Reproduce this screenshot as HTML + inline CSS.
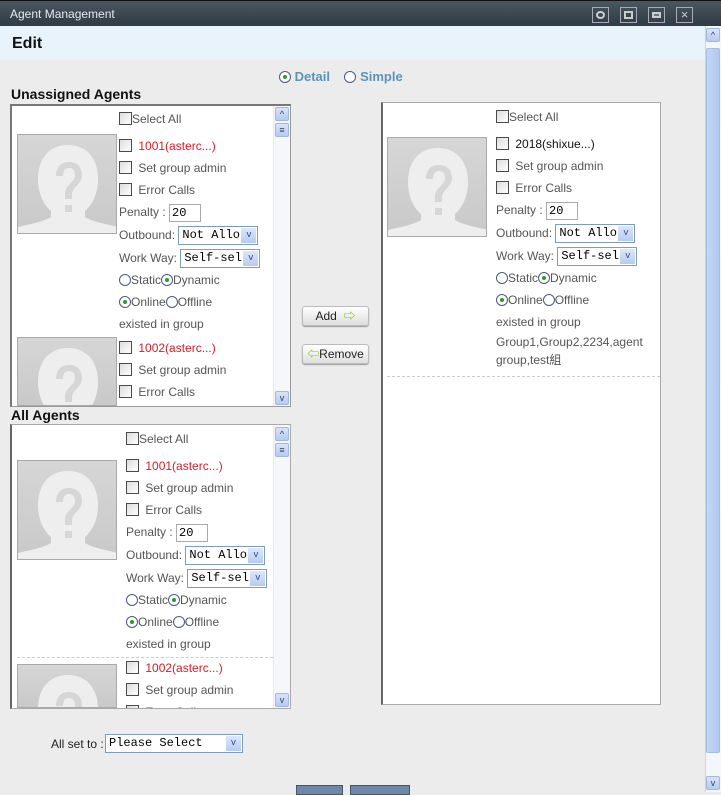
<!DOCTYPE html>
<html><head><meta charset="utf-8">
<style>
*{margin:0;padding:0;box-sizing:border-box}
body{width:721px;height:792px;overflow:hidden;background:#ececec;font-family:"Liberation Sans","Noto Sans CJK SC",sans-serif;font-size:12px;color:#555;position:relative}
.a{position:absolute}
.title{left:0;top:0;width:721px;height:26px;background:linear-gradient(#4a5660,#2e3a44);border-top:1px solid #111}
.title span{position:absolute;left:10px;top:6px;color:#e8e8e8;font-size:12px}
.tb{position:absolute;top:6px;width:17px;height:16px;border:1px solid #aab}
.edit{left:0;top:26px;width:705px;height:34px;background:#e8f3fc}
.edit b{position:absolute;left:12px;top:9px;font-size:16px;color:#111}
.vs{left:705px;top:26px;width:16px;height:766px;background:#f3f6fb;border-left:1px solid #c8d4e4}
.thumb{left:706px;top:48px;width:14px;height:705px;background:linear-gradient(90deg,#c4d6f6,#b0c8f0);border:1px solid #a8bde0;border-radius:2px}
.sb{width:14px;height:14px;background:linear-gradient(#d8e4fa,#b4cbf3);border:1px solid #a2b8e0;border-radius:2px;font-size:9px;color:#345;text-align:center;line-height:12px}
.box{background:#fff;border:1px solid #999;border-top:2px solid #777;border-left:2px solid #777;overflow:hidden}
.box2{background:#fff;border:1px solid #aaa;border-left:2px solid #666;overflow:hidden}
.iscroll{position:absolute;right:0;top:0;width:17px;height:100%;background:#f5f7fb;border-left:1px solid #e4e8f0}
.h{font-weight:bold;font-size:14px;color:#111}
.ag{position:absolute;width:160px}
.ag div{height:22px;line-height:22px;white-space:nowrap}
.cb{display:inline-block;width:13px;height:13px;border:1px solid #4a4a4a;background:linear-gradient(135deg,#ddd,#fff);vertical-align:-2px;margin-right:3px}
.rd{display:inline-block;width:12px;height:12px;border:1px solid #4a5a7a;border-radius:50%;background:#fff;vertical-align:-2px;position:relative}
.rd.on::after{content:"";position:absolute;left:3px;top:3px;width:4px;height:4px;border-radius:50%;background:#2c9a2c}
.red{color:#d0202a}
.inp{display:inline-block;width:32px;height:18px;border:1px solid #aaa;font-family:"Liberation Mono",monospace;font-size:12px;line-height:16px;padding-left:2px;color:#000;vertical-align:middle;background:#fff}
.sel{display:inline-block;width:80px;height:19px;border:1px solid #7f9db9;font-family:"Liberation Mono",monospace;font-size:12px;line-height:17px;padding-left:3px;color:#000;vertical-align:middle;position:relative;overflow:hidden;background:#fff}
.sel i{position:absolute;right:1px;top:1px;width:15px;height:15px;background:linear-gradient(#dce7fb,#b6cbf2);font-style:normal;font-size:9px;color:#2a4a8a;text-align:center;line-height:15px}
.av{position:absolute;width:100px;height:100px;border:1px solid #aaa;background:linear-gradient(#d6d6d6,#c9c9c9);overflow:hidden}
.btn{position:absolute;width:67px;height:20px;border:1px solid #bbb;border-radius:3px;background:linear-gradient(#fff,#dedede);box-shadow:0 1px 1px #999;font-size:12px;color:#222;text-align:center;line-height:18px}
.dash{position:absolute;border-top:1px dashed #ccc;height:0}
</style></head><body>
<div class="a title"><span>Agent Management</span>
<div class="tb" style="left:592px"><div style="margin:3px auto;width:9px;height:8px;border:2px solid #ccc;border-radius:50%"></div></div>
<div class="tb" style="left:620px"><div style="margin:3px auto;width:9px;height:8px;border:2px solid #ccc"></div></div>
<div class="tb" style="left:648px"><div style="margin:4px auto;width:9px;height:6px;border:2px solid #ccc;background:#678"></div></div>
<div class="tb" style="left:676px;color:#ccc;text-align:center;line-height:13px;font-size:13px">×</div>
</div>
<div class="a edit"><b>Edit</b></div>
<div class="a vs"></div>
<div class="a sb" style="left:706px;top:28px">^</div>
<div class="a thumb"></div>
<div class="a sb" style="left:706px;top:776px">v</div>

<div class="a" style="left:279px;top:69px;font-size:13px;font-weight:bold;color:#5b94b8"><span class="rd on"></span> Detail &nbsp;&nbsp; <span class="rd"></span> Simple</div>
<div class="a h" style="left:11px;top:86px">Unassigned Agents</div>
<div class="a h" style="left:11px;top:407px">All Agents</div>

<div class="a box" style="left:10px;top:104px;width:281px;height:303px">
<div class="iscroll"><div class="sb" style="margin:1px 0 0 1px">^</div><div class="sb" style="margin:2px 0 0 1px">≡</div><div class="sb" style="position:absolute;bottom:1px;left:1px">v</div></div>
</div>
<div class="a box2" style="left:10px;top:424px;width:281px;height:285px">
<div class="iscroll"><div class="sb" style="margin:2px 0 0 1px">^</div><div class="sb" style="margin:2px 0 0 1px">≡</div><div class="sb" style="position:absolute;bottom:1px;left:1px">v</div></div>
</div>
<div class="a" style="left:381px;top:102px;width:280px;height:603px;background:#fff;border:1px solid #aaa;border-left:2px solid #666"></div>
<div class="dash" style="left:387px;top:376px;width:273px"></div>
<div class="dash" style="left:17px;top:657px;width:256px"></div>

<svg width="0" height="0" style="position:absolute"><defs>
<g id="sil"><path d="M50 10C31 10 20 24 20 44c0 15 6 26 13 32v6C25 87 12 89 0 92v8h100v-8c-12-3-25-5-33-10v-6c7-6 13-17 13-32C80 24 69 10 50 10z" fill="#eeeeee"/><path d="M38 41c0-9 5-14 13-14s13 5 13 13c0 10-10 11-10 20v4h-7v-5c0-10 10-11 10-19 0-4-2-7-6-7s-6 3-6 8z M47 70h7v7h-7z" fill="#d6d6d6"/></g>
</defs></svg>
<div class="av" style="left:17px;top:134px"><svg width="100" height="100"><use href="#sil"/></svg></div>
<div class="av" style="left:17px;top:337px;height:69px"><svg width="100" height="100"><use href="#sil"/></svg></div>
<div class="av" style="left:17px;top:460px"><svg width="100" height="100"><use href="#sil"/></svg></div>
<div class="av" style="left:17px;top:664px;height:44px"><svg width="100" height="100"><use href="#sil"/></svg></div>
<div class="av" style="left:387px;top:137px"><svg width="100" height="100"><use href="#sil"/></svg></div>

<div class="ag" style="left:119px;top:108px;height:298px;overflow:hidden">
<div><span class="cb" style="margin-right:0"></span>Select All</div>
<div style="margin-top:5px"><span class="cb"></span> <span class="red">1001(asterc...)</span></div>
<div><span class="cb"></span> Set group admin</div>
<div><span class="cb"></span> Error Calls</div>
<div>Penalty : <span class="inp">20</span></div>
<div style="margin-top:1px">Outbound: <span class="sel">Not Allo<i>v</i></span></div>
<div style="margin-top:1px">Work Way: <span class="sel">Self-sel<i>v</i></span></div>
<div><span class="rd"></span>Static<span class="rd on"></span>Dynamic</div>
<div><span class="rd on"></span>Online<span class="rd"></span>Offline</div>
<div>existed in group</div>
<div style="margin-top:2px"><span class="cb"></span> <span class="red">1002(asterc...)</span></div>
<div><span class="cb"></span> Set group admin</div>
<div><span class="cb"></span> Error Calls</div>
</div>

<div class="ag" style="left:126px;top:428px;height:280px;overflow:hidden">
<div><span class="cb" style="margin-right:0"></span>Select All</div>
<div style="margin-top:5px"><span class="cb"></span> <span class="red">1001(asterc...)</span></div>
<div><span class="cb"></span> Set group admin</div>
<div><span class="cb"></span> Error Calls</div>
<div>Penalty : <span class="inp">20</span></div>
<div style="margin-top:1px">Outbound: <span class="sel">Not Allo<i>v</i></span></div>
<div style="margin-top:1px">Work Way: <span class="sel">Self-sel<i>v</i></span></div>
<div><span class="rd"></span>Static<span class="rd on"></span>Dynamic</div>
<div><span class="rd on"></span>Online<span class="rd"></span>Offline</div>
<div>existed in group</div>
<div style="margin-top:2px"><span class="cb"></span> <span class="red">1002(asterc...)</span></div>
<div><span class="cb"></span> Set group admin</div>
<div><span class="cb"></span> Error Calls</div>
</div>

<div class="ag" style="left:496px;top:106px;width:160px">
<div><span class="cb" style="margin-right:0"></span>Select All</div>
<div style="margin-top:5px"><span class="cb"></span> <span style="color:#111">2018(shixue...)</span></div>
<div><span class="cb"></span> Set group admin</div>
<div><span class="cb"></span> Error Calls</div>
<div>Penalty : <span class="inp">20</span></div>
<div style="margin-top:1px">Outbound: <span class="sel">Not Allo<i>v</i></span></div>
<div style="margin-top:1px">Work Way: <span class="sel">Self-sel<i>v</i></span></div>
<div><span class="rd"></span>Static<span class="rd on"></span>Dynamic</div>
<div><span class="rd on"></span>Online<span class="rd"></span>Offline</div>
<div>existed in group</div>
<div style="height:18px;line-height:18px">Group1,Group2,2234,agent</div>
<div style="height:18px;line-height:18px">group,test組</div>
</div>

<div class="btn" style="left:302px;top:306px">Add &nbsp;<span style="color:#8c0;font-weight:bold">⇨</span></div>
<div class="btn" style="left:302px;top:344px"><span style="color:#8c0;font-weight:bold">⇦</span>Remove</div>

<div class="a" style="left:51px;top:737px;color:#222">All set to :</div>
<div class="a sel" style="left:105px;top:734px;width:138px">Please Select<i>v</i></div>

<div class="a" style="left:296px;top:785px;width:47px;height:10px;background:#6d88a8;border:1px solid #456"></div>
<div class="a" style="left:350px;top:785px;width:60px;height:10px;background:#6d88a8;border:1px solid #456"></div>
</body></html>
